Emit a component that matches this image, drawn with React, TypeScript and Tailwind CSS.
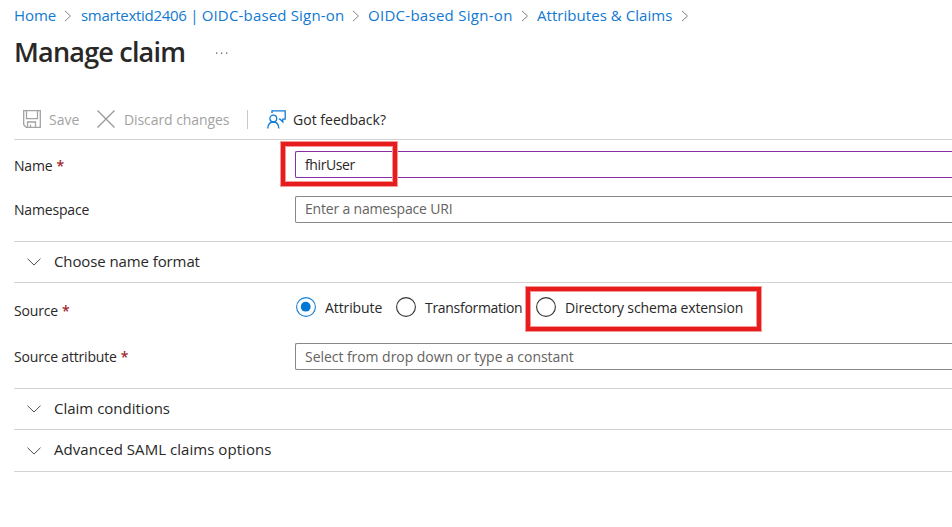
import type { ReactNode } from "react";

function Crumb({ children, className }: { children: ReactNode; className: string }) {
  return (
    <div className={`flex shrink-0 items-center justify-between text-[15px] text-[#1079d2] ${className}`}>
      <a className="whitespace-nowrap">{children}</a>
      <svg className="h-3 w-2 shrink-0" viewBox="0 0 8 12" fill="none" stroke="#858585">
        <path d="M1 1 6.5 6 1 11" />
      </svg>
    </div>
  );
}

function Label({ children, required }: { children: string; required?: boolean }) {
  return (
    <div className="w-[281px] shrink-0 whitespace-nowrap text-[14px] leading-5 tracking-[-0.18px]">
      {children}
      {required && <span className="ml-[4px] font-semibold text-[#a4262c]">*</span>}
    </div>
  );
}

function Section({ children, className }: { children: ReactNode; className: string }) {
  return (
    <div className={`ml-[14px] flex items-center border-t border-[#d2d2d2] pl-[13px] ${className}`}>
      <svg className="h-2 w-[14px] shrink-0" viewBox="0 0 14 8" fill="none" stroke="#505050">
        <path d="M.5.7 7 7l6.500-6.300" />
      </svg>
      <span className="ml-[13px] pb-[2px] text-[15px]">{children}</span>
    </div>
  );
}

function Radio({ checked }: { checked?: boolean }) {
  return (
    <svg className="size-5 shrink-0" viewBox="0 0 20 20" fill="none">
      <circle cx="10" cy="10" r="9.4" stroke={checked ? "#1580d6" : "#333"} strokeWidth="1.1" />
      {checked && <circle cx="9.700" cy="9.700" r="4.900" fill="#0078d4" />}
    </svg>
  );
}

function Field({ children, className }: { children: ReactNode; className: string }) {
  return (
    <div className={`flex h-[27px] flex-1 items-center whitespace-nowrap rounded-l-[2px] border border-r-0 pl-[9px] text-[14px] ${className}`}>
      {children}
    </div>
  );
}

export default function App() {
  return (
    <main className="h-[527px] w-full overflow-hidden bg-white font-['Open_Sans','Noto_Sans',sans-serif] text-[#292827]">
      <nav className="flex h-[31px] items-center pl-[14px]">
        <Crumb className="mr-[9px] w-[58px] tracking-[-0.1px]">Home</Crumb>
        <Crumb className="mr-[8px] w-[279px]">
          <span className="tracking-[-0.3px]">smartextid2406 | </span>
          <span className="tracking-[0.17px]">OIDC-based Sign-on</span>
        </Crumb>
        <Crumb className="mr-[8px] w-[161px] tracking-[0.28px]">OIDC-based Sign-on</Crumb>
        <Crumb className="w-[152px] tracking-[0.05px]">Attributes &amp; Claims</Crumb>
      </nav>

      <header className="flex h-[42px] items-center pl-[14px]">
        <h1 className="w-[201px] whitespace-nowrap text-[27px] font-semibold tracking-[-0.8px]">Manage claim</h1>
        <svg className="mt-[2px] h-1 w-[14px]" viewBox="0 0 14 4" fill="#555">
          <path d="M1 1.500h1.300v1.300H1zM6 1.500h1.300v1.300H6zM11 1.500h1.300v1.300H11z" />
        </svg>
      </header>

      <div className="ml-[14px] mt-[26px] flex h-[41px] items-center border-b border-[#d2d2d2] pl-[9px] text-[14px]">
        <svg className="size-[18px]" viewBox="0 0 18 18" fill="none" stroke="#a3a3a3" strokeWidth="1.300">
          <path d="M.7.7h16.600v16.600H3.200L.7 14.800zM3.500.7v8h11v-8M4.500 17v-5h8v5M7.500 17v-2.500" />
        </svg>
        <span className="ml-2 w-[48px] text-[#a3a3a3]">Save</span>
        <svg className="size-[18px]" viewBox="0 0 18 18" fill="none" stroke="#999" strokeWidth="1.300">
          <path d="m.5.500 17 17m0-17-17 17" />
        </svg>
        <span className="ml-[9px] w-[123px] whitespace-nowrap tracking-[-0.08px] text-[#a3a3a3]">Discard changes</span>
        <span className="h-[19px] w-px bg-[#c8c8c8]" />
        <svg className="ml-[19px] h-[19px] w-[19px]" viewBox="0 0 19 19" fill="none" stroke="#0f7bd5" strokeWidth="1.300">
          <path d="M5 3V.8h13.200v8.400h-2.400v2.700l-2.700-2.700h-1.300" />
          <circle cx="6.300" cy="8.600" r="3.400" />
          <path d="M.7 18.500c.3-4 2.400-6.500 5.600-6.500s5.300 2.500 5.600 6.500" />
        </svg>
        <span className="ml-[7px] tracking-[0.03px]">Got feedback?</span>
      </div>

      <form>
        <div className="relative flex h-[49px] items-center pl-[14px]">
          <div className="pt-[2px]"><Label required>Name</Label></div>
          <Field className="border-[#8a2da5] pb-px tracking-[-0.4px]">fhirUser</Field>
          <span className="absolute left-[281px] top-[2px] h-[44px] w-[116px] border-4 border-[#e81c1c] outline outline-[#f59a9a] inset-ring inset-ring-[#f59a9a]" />
        </div>
        <div className="flex h-[40px] items-center pl-[14px]">
          <div className="pt-[2px]"><Label>Namespace</Label></div>
          <Field className="border-[#8a8886] pb-px tracking-[-0.18px] text-[#65635f]">Enter a namespace URI</Field>
        </div>
        <Section className="mt-[12px] h-[41px] tracking-[-0.1px]">Choose name format</Section>
        <div className="ml-[14px] flex h-[50px] items-center border-t border-[#d2d2d2]">
          <div className="pt-[7px]"><Label required>Source</Label></div>
          <div className="-mt-px ml-px flex items-center whitespace-nowrap text-[14px]">
            <label className="flex w-[100px] items-center gap-[9px] tracking-[-0.1px]"><Radio checked />Attribute</label>
            <label className="flex w-[140px] items-center gap-[9px] tracking-[-0.3px]"><Radio />Transformation</label>
            <label className="relative flex items-center gap-[9px] tracking-[-0.14px]">
              <Radio />Directory schema extension
              <span className="absolute -top-[10px] -left-[10px] h-[44px] w-[235px] border-4 border-[#e81c1c] outline outline-[#f59a9a] inset-ring inset-ring-[#f59a9a]" />
            </label>
          </div>
        </div>
        <div className="flex h-[49px] items-center pl-[14px]">
          <Label required>Source attribute</Label>
          <Field className="border-[#8a8886] tracking-[-0.05px] text-[#65635f]">Select from drop down or type a constant</Field>
        </div>
        <Section className="mt-[7px] h-[41px]">Claim conditions</Section>
        <Section className="h-[43px] border-b tracking-[0.05px]">Advanced SAML claims options</Section>
      </form>
    </main>
  );
}
